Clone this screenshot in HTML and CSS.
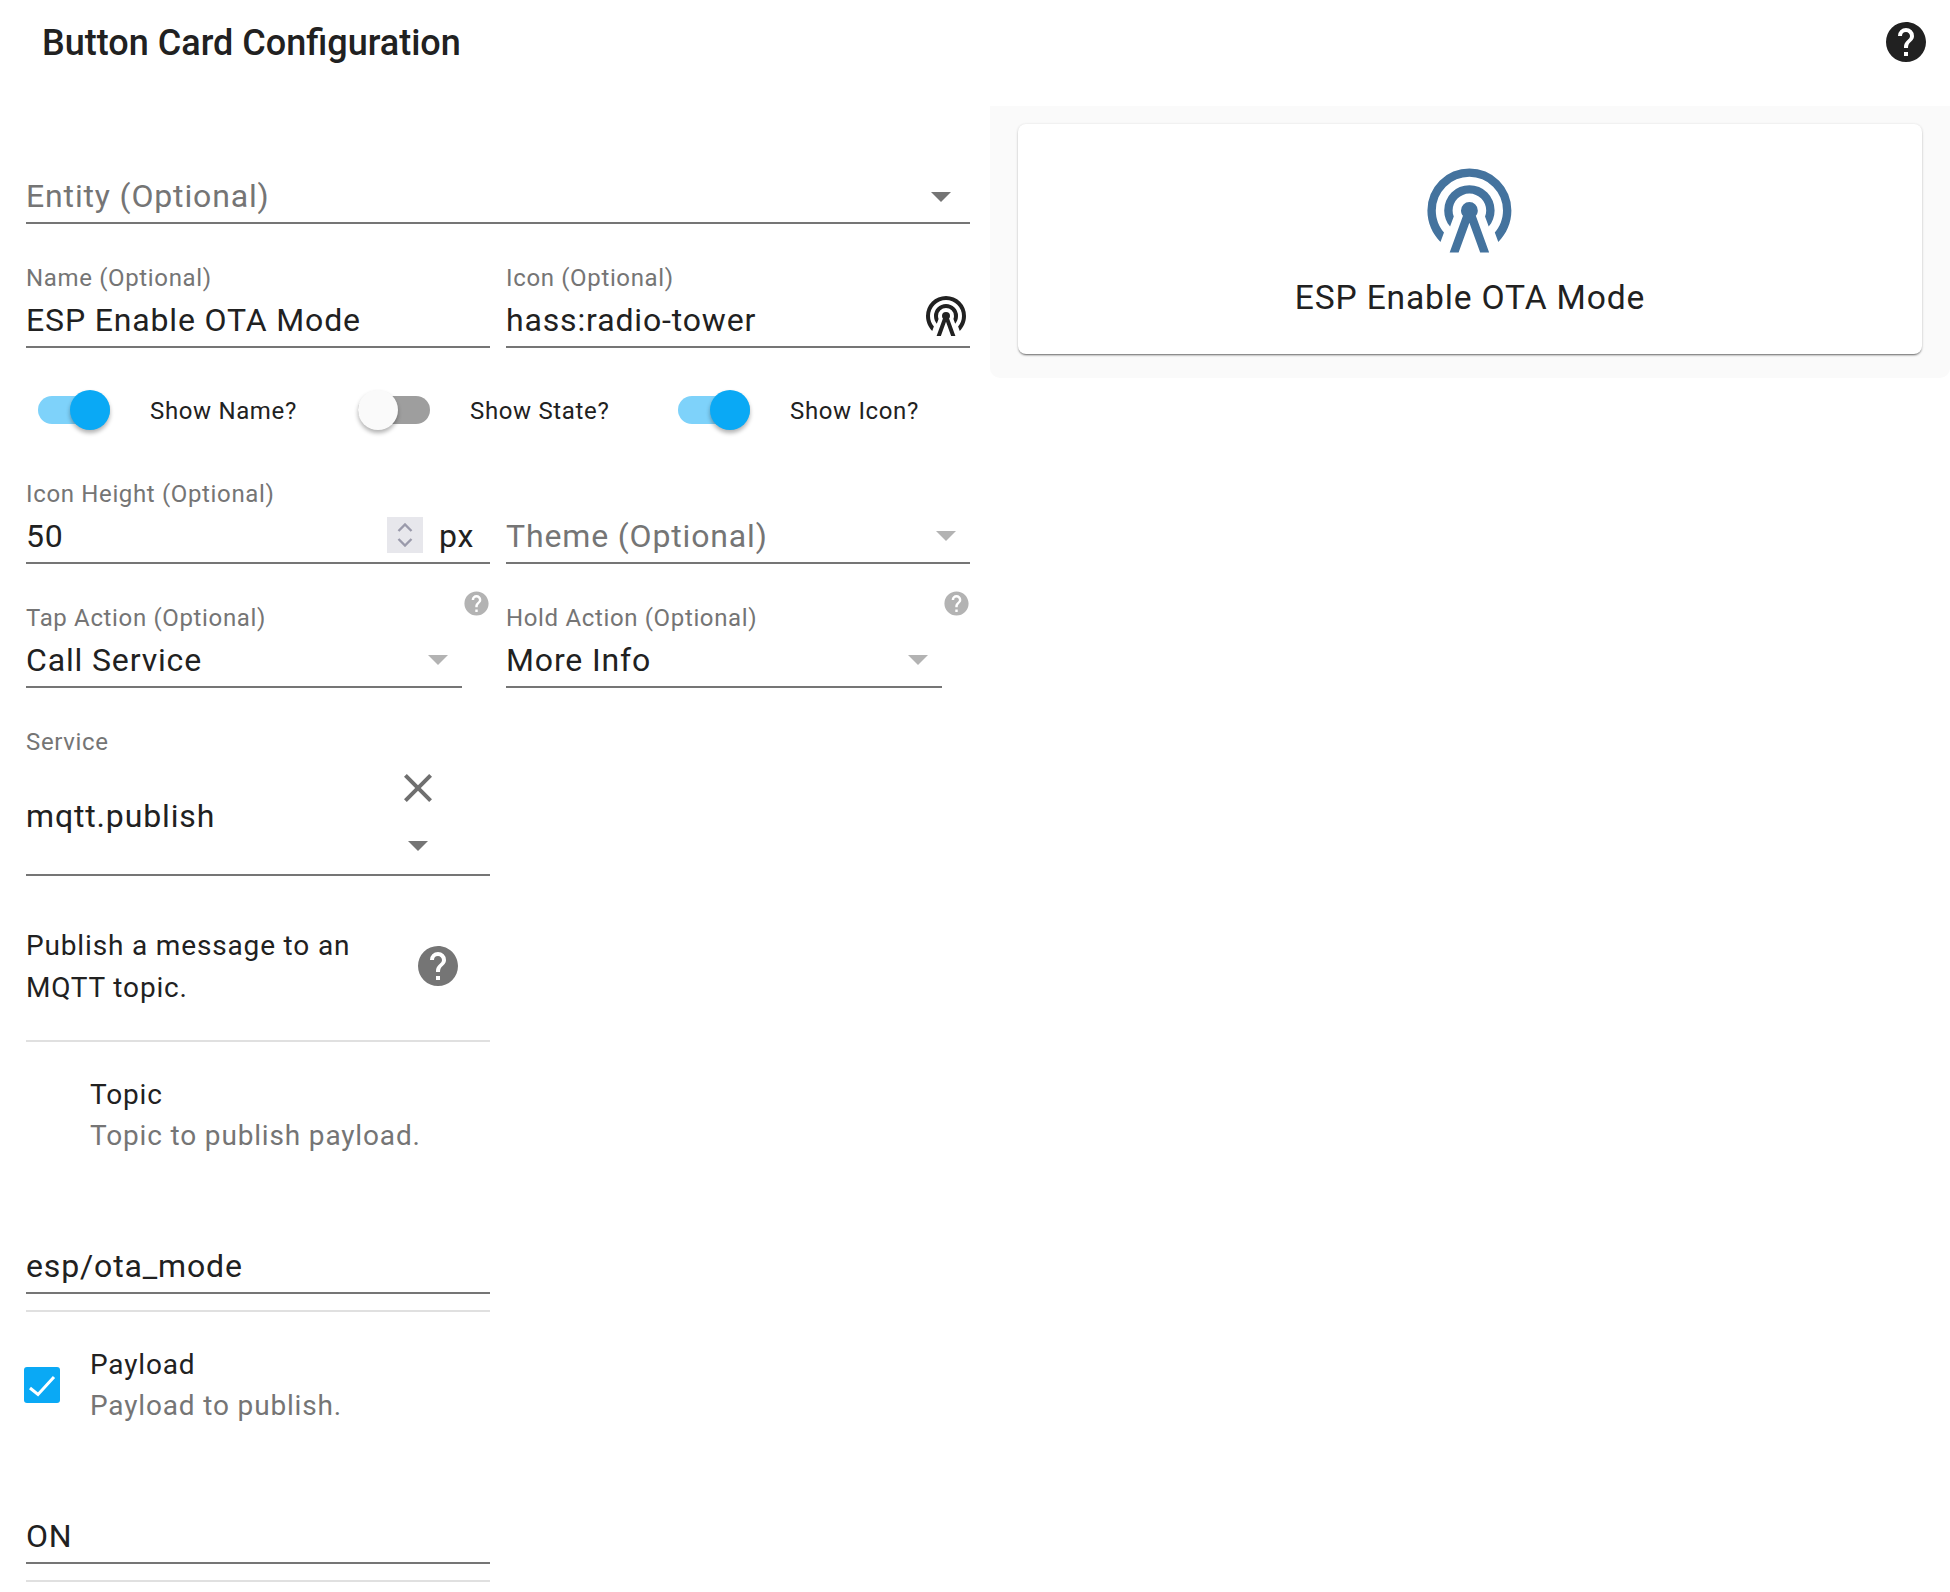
FILE: index.html
```html
<!DOCTYPE html>
<html lang="en">
<head>
<meta charset="utf-8">
<title>Button Card Configuration</title>
<link rel="stylesheet" href="styles.css">
</head>
<body>
<svg class="defs" width="0" height="0" aria-hidden="true">
  <symbol id="i-tower" viewBox="0 0 24 24"><path d="M12 10A2 2 0 0 1 14 12C14 12.5 13.82 12.94 13.53 13.29L16.7 22H14.57L12 14.93L9.43 22H7.3L10.47 13.29C10.18 12.94 10 12.5 10 12A2 2 0 0 1 12 10M12 8A4 4 0 0 0 8 12C8 12.5 8.1 13 8.28 13.46L7.4 15.86C6.53 14.81 6 13.47 6 12A6 6 0 0 1 12 6A6 6 0 0 1 18 12C18 13.47 17.47 14.81 16.6 15.86L15.72 13.46C15.9 13 16 12.5 16 12A4 4 0 0 0 12 8M12 4A8 8 0 0 0 4 12C4 14 4.73 15.83 5.95 17.24L5.12 19.5C3.2 17.55 2 14.91 2 12A10 10 0 0 1 12 2A10 10 0 0 1 22 12C22 14.91 20.8 17.55 18.88 19.5L18.05 17.24C19.27 15.83 20 14 20 12A8 8 0 0 0 12 4Z"/></symbol>
  <symbol id="i-help" viewBox="0 0 24 24"><path d="M15.07,11.25L14.17,12.17C13.45,12.89 13,13.5 13,15H11V14.5C11,13.39 11.45,12.39 12.17,11.67L13.41,10.41C13.78,10.05 14,9.55 14,9C14,7.89 13.1,7 12,7A2,2 0 0,0 10,9H8A4,4 0 0,1 12,5A4,4 0 0,1 16,9C16,9.88 15.64,10.67 15.07,11.25M13,19H11V17H13M12,2A10,10 0 0,0 2,12A10,10 0 0,0 12,22A10,10 0 0,0 22,12C22,6.47 17.5,2 12,2Z"/></symbol>
  <symbol id="i-close" viewBox="0 0 24 24"><path d="M19,6.41L17.59,5L12,10.59L6.41,5L5,6.41L10.59,12L5,17.59L6.41,19L12,13.41L17.59,19L19,17.59L13.41,12L19,6.41Z"/></symbol>
  <symbol id="i-arrow" viewBox="0 0 20 10"><path d="M0 0H20L10 10Z"/></symbol>
</svg>

<header class="header">
  <h1 class="title">Button Card Configuration</h1>
  <svg class="icon help-top"><use href="#i-help"/></svg>
</header>

<div class="main">
  <form class="editor">
    <div class="field field-bare field-entity">
      <div class="value placeholder"><span class="grow">Entity (Optional)</span><svg class="arrow arrow-entity"><use href="#i-arrow"/></svg></div>
    </div>

    <div class="row gap-42">
      <div class="field">
        <div class="label">Name (Optional)</div>
        <div class="value"><span class="grow">ESP Enable OTA Mode</span></div>
      </div>
      <div class="field">
        <div class="label">Icon (Optional)</div>
        <div class="value"><span class="grow">hass:radio-tower</span><svg class="icon field-icon"><use href="#i-tower"/></svg></div>
      </div>
    </div>

    <div class="toggles">
      <div class="toggle-item"><span class="switch on"><span class="thumb"></span></span><span class="toggle-label">Show Name?</span></div>
      <div class="toggle-item"><span class="switch"><span class="thumb"></span></span><span class="toggle-label">Show State?</span></div>
      <div class="toggle-item"><span class="switch on"><span class="thumb"></span></span><span class="toggle-label">Show Icon?</span></div>
    </div>

    <div class="row gap-52">
      <div class="field">
        <div class="label">Icon Height (Optional)</div>
        <div class="value"><span class="grow">50</span>
          <span class="spin">
            <svg viewBox="0 0 16 24" class="spin-arrows"><path d="M1.5 8L8 1.5L14.5 8M1.5 16L8 22.5L14.5 16"/></svg>
          </span>
          <span class="unit">px</span>
        </div>
      </div>
      <div class="field">
        <div class="value placeholder value-offset"><span class="grow">Theme (Optional)</span><svg class="arrow arrow-theme"><use href="#i-arrow"/></svg></div>
      </div>
    </div>

    <div class="row gap-42">
      <div class="action">
        <div class="field field-short">
          <div class="label">Tap Action (Optional)</div>
          <div class="value"><span class="grow">Call Service</span><svg class="arrow arrow-light"><use href="#i-arrow"/></svg></div>
        </div>
        <svg class="icon help-small"><use href="#i-help"/></svg>
      </div>
      <div class="action">
        <div class="field field-short">
          <div class="label">Hold Action (Optional)</div>
          <div class="value"><span class="grow">More Info</span><svg class="arrow arrow-light"><use href="#i-arrow"/></svg></div>
        </div>
        <svg class="icon help-small"><use href="#i-help"/></svg>
      </div>
    </div>

    <div class="service-col">
      <div class="field service">
        <div class="label">Service</div>
        <div class="service-body">
          <span class="service-value">mqtt.publish</span>
          <span class="service-icons">
            <svg class="icon close"><use href="#i-close"/></svg>
            <svg class="arrow arrow-service"><use href="#i-arrow"/></svg>
          </span>
        </div>
      </div>

      <div class="desc">
        <p class="desc-text">Publish a message to an MQTT topic.</p>
        <svg class="icon help-desc"><use href="#i-help"/></svg>
      </div>

      <section class="param">
        <div class="param-head">
          <span class="check-slot"></span>
          <div>
            <div class="param-name">Topic</div>
            <div class="param-desc">Topic to publish payload.</div>
          </div>
        </div>
        <div class="field field-bare param-field"><div class="value">esp/ota_mode</div></div>
      </section>

      <section class="param">
        <div class="param-head">
          <span class="check-slot"><span class="checkbox"><svg viewBox="0 0 36 36" class="check-mark"><path d="M6 21L14 27.5L30 10"/></svg></span></span>
          <div>
            <div class="param-name">Payload</div>
            <div class="param-desc">Payload to publish.</div>
          </div>
        </div>
        <div class="field field-bare param-field"><div class="value">ON</div></div>
      </section>
    </div>
  </form>

  <aside class="preview">
    <div class="card">
      <svg class="icon card-icon"><use href="#i-tower"/></svg>
      <div class="card-name">ESP Enable OTA Mode</div>
    </div>
  </aside>
</div>
</body>
</html>
```

FILE: styles.css
```css
* { box-sizing: border-box; }

html, body { margin: 0; height: 100%; }

body {
  background: #fff;
  color: #212121;
  font-family: Roboto, "Noto Sans", sans-serif;
  overflow: hidden;
}

.defs { position: absolute; }

.icon { display: block; fill: currentColor; flex: none; }

/* Header */
.header {
  display: flex;
  align-items: center;
  justify-content: space-between;
  height: 84px;
  padding: 0 20px 0 42px;
  margin-bottom: 22px;
}

.title {
  margin: 2px 0 0;
  font-size: 36px;
  font-weight: 500;
  line-height: 40px;
  letter-spacing: 0;
}

.help-top { width: 48px; height: 48px; color: #212121; }

/* Main layout */
.main { display: flex; align-items: flex-start; gap: 20px; }

.editor { width: 970px; padding-left: 26px; flex: none; }

.row { display: grid; grid-template-columns: 464px 464px; column-gap: 16px; }
.gap-42 { margin-top: 42px; }
.gap-52 { margin-top: 52px; }

/* Fields */
.field {
  display: flex;
  flex-direction: column;
  justify-content: flex-end;
  border-bottom: 2px solid #757575;
  padding-bottom: 6px;
}

.field-entity { margin-top: 70px; padding-bottom: 6px; }

.label {
  height: 24px;
  margin-bottom: 10px;
  font-size: 24px;
  line-height: 24px;
  color: #757575;
  letter-spacing: 0.65px;
}

.value {
  display: flex;
  align-items: center;
  height: 40px;
  font-size: 32px;
  line-height: 40px;
  letter-spacing: 0.85px;
  white-space: nowrap;
}

.placeholder { color: #757575; }
.value-offset { margin-top: 34px; }

.grow { flex: 1; }

.arrow { display: block; flex: none; width: 20px; height: 10px; fill: #757575; }
.arrow-entity { margin-right: 19px; margin-top: 2px; }
.arrow-theme { margin-right: 14px; fill: #b3b3b3; }
.arrow-light { margin-right: 14px; fill: #b3b3b3; }

.field-icon { width: 48px; height: 48px; margin-top: -9px; color: #212121; }

.spin {
  display: flex;
  align-items: center;
  justify-content: center;
  width: 36px;
  height: 36px;
  margin-top: -2px;
  background: #e7e7ec;
}

.spin-arrows { width: 16px; height: 24px; fill: none; stroke: #9a9aab; stroke-width: 2.4; }

.unit { width: 67px; padding-left: 16px; }

/* Toggles */
.toggles { display: flex; height: 40px; margin-top: 42px; padding-left: 12px; }

.toggle-item { display: flex; align-items: center; flex: none; width: 320px; }

.switch {
  position: relative;
  display: block;
  width: 72px;
  height: 28px;
  border-radius: 14px;
  background: #9e9e9e;
}

.switch.on { background: #7ed2fa; }

.thumb {
  position: absolute;
  top: -6px;
  left: 0;
  width: 40px;
  height: 40px;
  border-radius: 50%;
  background: #fafafa;
  box-shadow: 0 3px 4px rgba(0, 0, 0, .3);
}

.switch.on .thumb { left: 32px; background: #0aa9f5; }

.toggle-label { margin: 2px 0 0 40px; font-size: 24px; letter-spacing: 0.65px; }

/* Tap / hold */
.action { position: relative; }
.field-short { width: 436px; }
.help-small { position: absolute; top: -17px; left: 435.5px; width: 29px; height: 29px; color: #b3b3b3; }

/* Service */
.service-col { width: 464px; }
.service { margin-top: 42px; padding-bottom: 0; }
.service .label { margin-bottom: 0; }

.service-body { display: flex; align-items: center; justify-content: space-between; height: 120px; }

.service-value { padding-top: 4px; font-size: 32px; letter-spacing: 0.85px; }

.service-icons { display: flex; flex-direction: column; align-items: center; width: 48px; margin-right: 48px; margin-top: -14px; }

.close { width: 48px; height: 48px; color: #6f6f6f; }
.arrow-service { margin-top: 29px; }

/* Description */
.desc {
  display: flex;
  align-items: center;
  justify-content: space-between;
  margin-top: 48px;
  padding-bottom: 31px;
  border-bottom: 2px solid #e0e0e0;
}

.desc-text {
  width: 380px;
  margin: 0;
  padding-top: 1px;
  font-size: 28px;
  line-height: 42px;
  letter-spacing: 0.84px;
}

.help-desc { width: 48px; height: 48px; margin-right: 28px; margin-bottom: 1px; color: #757575; }

/* Parameters */
.param { padding-top: 32px; border-bottom: 2px solid #e0e0e0; padding-bottom: 16px; }

.param-head { display: flex; align-items: center; }

.check-slot { display: block; width: 64px; flex: none; }

.checkbox {
  display: block;
  width: 36px;
  height: 36px;
  margin-left: -2px;
  border-radius: 3px;
  background: #0aa9f5;
}

.check-mark { display: block; width: 36px; height: 36px; fill: none; stroke: #fff; stroke-width: 3; }

.param-name, .param-desc { font-size: 28px; line-height: 41px; letter-spacing: 0.84px; }
.param-desc { color: #757575; }

.param-field { margin-top: 90px; }

/* Preview */
.preview {
  width: 960px;
  flex: none;
  padding: 18px 28px 24px;
  background: #fafafa;
  border-radius: 0 0 10px 10px;
}

.card {
  display: flex;
  flex-direction: column;
  align-items: center;
  height: 230px;
  padding-top: 36px;
  border-radius: 8px;
  background: #fff;
  box-shadow: 0 2px 2px -1px rgba(0,0,0,.5), 0 1px 3px rgba(0,0,0,.14), 0 0 3px rgba(0,0,0,.05);
}

.card-icon { width: 100.8px; height: 100.8px; margin-left: -1px; color: #44739e; }

.card-name { margin-top: 15.5px; font-size: 33.6px; line-height: 44px; letter-spacing: 0.84px; }
```
